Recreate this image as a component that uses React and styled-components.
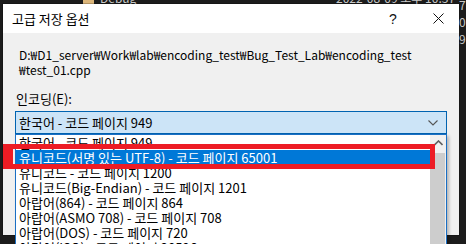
import React from 'react';
import styled, { createGlobalStyle, css } from 'styled-components';

const FONT = `"Noto Sans CJK KR", "Noto Sans", sans-serif`;

const encodings = [
  '한국어 - 코드 페이지 949',
  '유니코드(서명 있는 UTF-8) - 코드 페이지 65001',
  '유니코드 - 코드 페이지 1200',
  '유니코드(Big-Endian) - 코드 페이지 1201',
  '아랍어(864) - 코드 페이지 864',
  '아랍어(ASMO 708) - 코드 페이지 708',
  '아랍어(DOS) - 코드 페이지 720',
  '아랍어(ISO) - 코드 페이지 28596',
];

function App() {
  return (
    <Desktop>
      <GlobalStyle />
      <Folder />
      <BgText $top={-10} $left={100}>Debug</BgText>
      <BgText $top={-10} $left={336}>2022-08-09 오후 10:37</BgText>
      <BgText $top={-3} $left={459}>7</BgText>
      <BgText $top={14} $left={459}>06</BgText>
      <BgText $top={31} $left={459}>9</BgText>

      <Dialog>
        <TitleBar>
          <Title>고급 저장 옵션</Title>
          <CaptionButton $w={48}>?</CaptionButton>
          <CaptionButton $w={42}>
            <svg width="11" height="11" viewBox="0 0 11 11">
              <path d="M0.5 0.5 L10.5 10.5 M10.5 0.5 L0.5 10.5" stroke="#111" strokeWidth="1" />
            </svg>
          </CaptionButton>
        </TitleBar>
        <Body>
          <PathText>
            D:₩D1_server₩Work₩lab₩encoding_test₩Bug_Test_Lab₩encoding_test
            <br />
            ₩test_01.cpp
          </PathText>
          <Label>인코딩(E):</Label>
          <Combo>
            <span>{encodings[0]}</span>
            <svg width="10" height="6" viewBox="0 0 10 6">
              <path d="M0.5 0.5 L5 5 L9.5 0.5" fill="none" stroke="#555" strokeWidth="1.1" />
            </svg>
          </Combo>
        </Body>
      </Dialog>

      <DropList>
        <Items>
          {encodings.map((e, i) => (
            <Item key={e} $selected={i === 1}>{e}</Item>
          ))}
        </Items>
        <ScrollBar>
          <ScrollArrow>
            <svg width="9" height="6" viewBox="0 0 9 6">
              <path d="M0.5 5 L4.5 1 L8.5 5" fill="none" stroke="#606060" strokeWidth="1.6" />
            </svg>
          </ScrollArrow>
          <Thumb />
        </ScrollBar>
      </DropList>

      <Highlight />
    </Desktop>
  );
}

const GlobalStyle = createGlobalStyle`
  body {
    margin: 0;
    background: #1c1c1c;
    overflow: hidden;
  }
`;

const Desktop = styled.div`
  position: relative;
  width: 466px;
  height: 244px;
  overflow: hidden;
  background: #1c1c1c;
  font-family: ${FONT};
  font-size: 13px;
`;

const BgText = styled.span`
  position: absolute;
  top: ${({ $top }) => $top}px;
  left: ${({ $left }) => $left}px;
  color: #c8c8c8;
  font-size: 12px;
  line-height: 15px;
  white-space: nowrap;
`;

const Folder = styled.div`
  position: absolute;
  top: -4px;
  left: 83px;
  width: 11px;
  height: 8px;
  background: #dcb67a;
`;

const Dialog = styled.div`
  position: absolute;
  left: 3px;
  top: 4px;
  width: 456px;
  height: 231px;
  display: flex;
  flex-direction: column;
  background: #f0f0f0;
  box-shadow: 0 0 0 1px rgba(0, 0, 0, 0.2);
`;

const TitleBar = styled.div`
  height: 29px;
  display: flex;
  align-items: center;
  padding-left: 9px;
  background: #fff;
`;

const Title = styled.span`
  flex: 1;
  color: #000;
  font-size: 13px;
`;

const CaptionButton = styled.div`
  width: ${({ $w }) => $w}px;
  height: 29px;
  display: flex;
  align-items: center;
  justify-content: center;
  color: #111;
  font-family: "Liberation Sans", sans-serif;
  font-size: 14px;
`;

const Body = styled.div`
  display: flex;
  flex-direction: column;
  padding: 14px 11px 0 12px;
`;

const PathText = styled.div`
  margin-left: 4px;
  color: #000;
  font-size: 12px;
  line-height: 15px;
  white-space: nowrap;
`;

const Label = styled.div`
  margin: 14px 0 0 1px;
  color: #000;
  line-height: 15px;
`;

const Combo = styled.div`
  margin-top: 5px;
  width: 432px;
  height: 23px;
  box-sizing: border-box;
  display: flex;
  align-items: center;
  justify-content: space-between;
  padding: 0 3px 0 3px;
  border: 1px solid #0063b1;
  background: #cce4f7;
  color: #000;
  svg {
    margin-right: 5px;
  }
`;

const DropList = styled.div`
  position: absolute;
  left: 15px;
  top: 134px;
  width: 432px;
  height: 124px;
  box-sizing: border-box;
  display: flex;
  border: 1px solid #1a6fc4;
  background: #fff;
  box-shadow: 2px 2px 3px rgba(0, 0, 0, 0.25);
`;

const Items = styled.div`
  flex: 1;
  display: flex;
  flex-direction: column;
`;

const selectedRow = css`
  background: #0078d7;
  color: #fff;
`;

const Item = styled.div`
  height: 15px;
  line-height: 15px;
  padding-left: 3px;
  color: #000;
  white-space: nowrap;
  ${({ $selected }) => $selected && selectedRow}
`;

const ScrollBar = styled.div`
  width: 16px;
  display: flex;
  flex-direction: column;
  background: #f0f0f0;
`;

const ScrollArrow = styled.div`
  height: 17px;
  display: flex;
  align-items: center;
  justify-content: center;
  padding-bottom: 2px;
  box-sizing: border-box;
`;

const Thumb = styled.div`
  flex: 1;
  margin: 1px 1px 0 0;
  background: #cdcdcd;
`;

const Highlight = styled.div`
  position: absolute;
  left: 3px;
  top: 144px;
  width: 432px;
  height: 25px;
  box-sizing: border-box;
  border: 5px solid #ed1c24;
  border-left-width: 10px;
  pointer-events: none;
`;

export default App;
